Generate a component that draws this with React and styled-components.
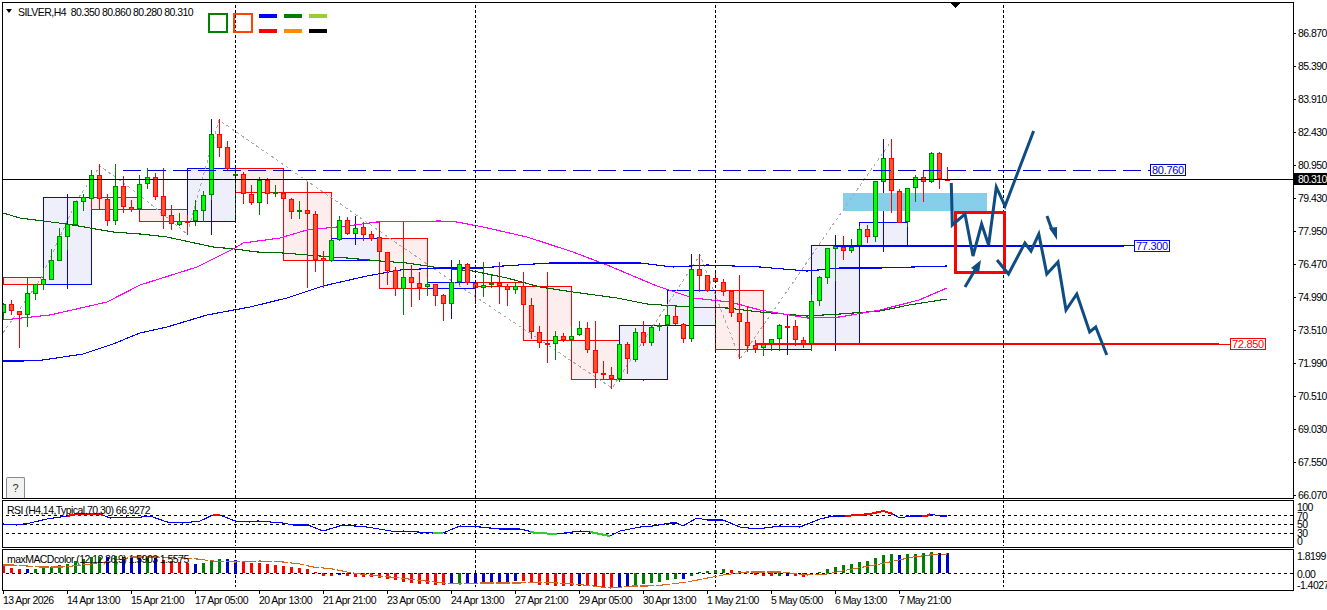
import React from 'react';
import styled, {createGlobalStyle} from 'styled-components';

const GlobalStyle = createGlobalStyle`
  html, body {
    margin: 0;
    padding: 0;
    background: #fff;
    overflow: hidden;
  }
  body {
    font-family: "Liberation Sans", Arial, sans-serif;
    font-size: 10.5px;
    letter-spacing: -0.55px;
    color: #000;
  }
`;

// up flag, body top, body bottom, high, low - all in page pixels, x = 3 + 8 * index
const CANDLES = [
  [1,304,313,303,320],[0,304,311,300,315],[0,311,315,311,348],[1,293,315,278,327],[1,284,294,284,300],
  [1,279,285,268,290],[1,260,280,249,280],[1,236,261,228,261],[1,224,237,224,250],[1,201,225,201,225],
  [1,197,202,194,211],[1,175,199,170,201],[0,175,199,164,209],[0,199,221,194,226],[1,186,221,164,225],
  [0,186,207,176,213],[0,207,210,200,212],[1,184,209,175,210],[1,177,184,168,189],[0,177,197,173,200],
  [0,196,216,168,229],[0,215,224,205,230],[1,221,225,213,226],[0,221,222,215,235],[1,210,221,200,226],
  [1,195,211,191,222],[1,134,195,134,200],[0,134,148,119,157],[0,147,169,141,171],[1,174,176,168,217],
  [0,174,194,172,204],[0,194,203,185,205],[1,180,203,177,215],[0,180,194,178,204],[1,192,194,185,197],
  [0,193,199,193,201],[0,199,212,198,219],[1,210,212,201,219],[0,210,214,202,229],[0,214,260,211,272],
  [0,258,261,251,288],[1,240,261,240,262],[1,220,240,216,241],[0,220,234,217,235],[1,228,234,228,234],
  [0,227,235,222,241],[0,234,239,231,241],[0,237,252,222,252],[0,252,271,252,285],[0,270,289,267,296],
  [1,277,289,253,315],[0,277,283,265,307],[0,283,288,272,300],[1,284,287,278,296],[0,284,296,284,306],
  [0,295,304,294,321],[1,282,304,282,304],[1,264,282,260,285],[0,264,283,263,285],[0,283,288,283,304],
  [1,285,288,262,297],[1,283,284,274,288],[0,283,286,262,304],[0,286,290,284,306],[1,286,290,282,294],
  [0,286,305,272,322],[0,305,332,298,339],[0,332,343,326,348],[0,343,344,326,363],[1,336,344,331,360],
  [0,336,340,333,342],[1,336,340,327,348],[1,328,335,321,336],[0,328,350,322,353],[0,350,373,321,388],
  [0,373,375,361,379],[0,375,379,367,389],[1,344,379,344,382],[0,344,359,342,374],[1,332,360,328,362],
  [0,332,343,321,346],[1,327,343,325,346],[1,325,327,323,331],[1,315,325,305,327],[0,316,324,307,325],
  [0,324,339,323,343],[1,269,339,269,342],[0,269,276,254,292],[0,275,291,275,292],[0,278,282,272,283],
  [0,282,292,279,296],[0,291,313,291,317],[0,313,322,275,359],[0,322,346,306,352],[0,345,349,340,353],
  [1,344,348,344,356],[1,339,344,339,351],[1,325,339,324,351],[0,326,327,326,327],[0,326,340,320,346],
  [0,340,344,337,348],[1,301,344,295,351],[1,277,301,276,306],[1,248,278,248,284],[1,246,249,246,281],
  [0,247,251,236,260],[1,247,251,239,253],[1,229,246,226,246],[0,229,237,225,243],[1,181,237,181,242],
  [1,158,182,158,182],[0,158,191,139,213],[0,191,223,189,223],[1,188,222,188,227],[1,177,188,175,202],
  [0,177,182,171,202],[1,153,182,152,183],[0,153,179,152,189],[0,179,180,167,180],
];

// higher timeframe boxes: x1, x2, top, bottom, colour, wick x, wick top, wick bottom
const BOXES = [
  [3,43,277,284,'r'],
  [43,91,197,284,'b',67,194,289],
  [91,139,197,209,'r'],
  [139,187,209,221,'r'],
  [187,235,168,221,'b',211,119,235],
  [235,283,168,192,'r'],
  [283,331,192,260,'r',307,182,288],
  [331,379,238,260,'b',355,216,245],
  [379,427,238,288,'r',403,222,315],
  [427,475,282,288,'b',451,260,319],
  [475,523,282,286,'r'],
  [523,571,286,340,'r',547,272,363],
  [571,619,340,379,'r',595,321,388],
  [619,667,325,379,'b',643,379,381],
  [667,715,290,325,'b',691,254,342],
  [715,763,290,349,'r',739,275,359],
  [763,811,344,349,'b',787,315,355],
  [811,859,245,344,'b',835,235,351],
  [859,907,222,245,'b',883,139,252],
];

const MA_GREEN = '3,213 20,218 43,221 67,224 90,228 113,232 140,234 167,237 190,242 213,247 235,249 257,252 283,253 320,256 347,258 380,261 407,263 440,268 473,271 507,278 540,287 573,292 617,298 647,304 690,307 727,308 760,312 807,316 840,314 880,311 909,305 947,299';
const MA_MAGENTA = '3,320 50,315 107,302 140,285 197,267 235,248 243,243 280,238 307,230 347,226 377,222 440,221 457,222 483,227 527,237 573,252 607,265 657,286 693,298 730,302 760,310 807,318 840,317 880,310 919,300 947,288';
const MA_BLUE = '3,361 23,361 43,360 83,354 113,344 140,333 167,327 207,315 250,307 287,298 323,286 367,276 400,270 440,268 483,268 503,266 550,263 590,263 640,263 673,267 707,265 760,267 807,271 840,268 880,268 947,266';
const ZIGZAG = '3,333 40,280 77,200 100,166 137,193 187,234 219,120 440,273 612,388 700,255 740,359 850,200 892,140';

const DRAWN_UP = '951.3,183 952.3,225 965,214 973,256 981.6,224 988.6,245 996.3,187 1005,206 1033.6,131';
const DRAWN_DOWN = '997,260 1008.5,274 1024.9,243 1031,251 1038.8,234 1046.8,274 1058,262 1066,310 1076.8,294 1089.7,332 1095.7,327 1106.8,355';

const RSI_LINE = '3,524 17,525 30,523 47,519 67,516 77,514 100,514 110,518 127,517 133,518 150,516 167,522 183,523 200,521 213,515 220,515 235,521 250,522 258,521 283,523 293,525 308,525 323,531 343,525 367,527 397,532 403,531 433,533 443,533 460,526 480,527 500,529 520,529 537,533 557,534 580,531 590,532 610,536 620,531 640,527 653,526 670,523 677,523 683,526 697,518 707,520 723,520 740,527 757,529 780,526 800,527 820,519 833,516 850,516 870,514 883,511 893,514 900,518 910,516 927,516 930,514 940,516 947,516';
const RSI_HOT = ['67,516 77,514 100,514 103,515', '213,515 220,515', '845,516 870,514 883,511 893,514', '922,516 927,516 930,514'];
const RSI_COLD = ['433,533 443,533', '530,532 537,533 557,534', '590,532 610,536'];

// histogram, one entry per candle: colour letter and the y of the far end of the bar
const MACD = [
  ['r',564],['r',568],['r',569],['b',569],['g',569],['g',567],['g',567],['g',565],['g',564],['g',561],
  ['g',559],['g',557],['g',557],['b',557],['g',556],['b',557],['b',558],['b',557],['g',557],['b',558],
  ['r',560],['r',561],['r',562],['r',563],['b',564],['g',563],['g',561],['g',559],['b',559],['b',560],
  ['r',561],['r',563],['r',563],['r',564],['r',565],['r',566],['r',567],['r',568],['r',569],['r',572],
  ['r',576],['r',576],['b',575],['r',576],['r',577],['r',577],['r',577],['r',578],['r',579],['r',580],
  ['r',582],['r',583],['r',584],['r',584],['r',585],['r',585],['b',584],['g',583],['b',583],['b',583],
  ['b',583],['b',582],['b',582],['b',582],['b',581],['r',581],['r',583],['r',585],['r',585],['r',586],
  ['r',586],['r',586],['b',586],['r',586],['r',587],['r',587],['r',587],['b',587],['b',587],['g',585],
  ['g',584],['g',583],['g',582],['g',580],['g',579],['b',579],['g',576],['g',572],['g',571],['g',570],
  ['g',569],['r',570],['r',571],['r',573],['r',575],['r',576],['r',576],['g',576],['b',576],['r',576],
  ['r',577],['g',575],['g',572],['g',569],['g',567],['g',565],['g',564],['g',562],['g',561],['g',558],
  ['g',555],['g',554],['b',555],['g',554],['g',554],['g',553],['g',552],['b',553],['b',553],
];
const MACD_SIGNAL = '3,565 13,565 27,566 40,567 63,567 83,565 100,563 117,560 133,557 157,557 183,558 197,559 213,561 235,562 260,561 283,562 300,564 313,567 333,569 347,572 367,575 390,577 417,580 443,583 460,584 480,583 500,583 520,583 540,582 573,584 593,586 610,588 633,586 647,586 663,585 687,582 713,577 723,575 747,572 780,572 807,575 827,574 847,570 880,564 913,557 930,555 947,554';

const VERTICALS = [235, 475, 715, 1003];
const HIST_COLORS = {g: '#008000', r: '#ff0000', b: '#0000cd'};
const TIMES = ['13 Apr 2026','14 Apr 13:00','15 Apr 21:00','17 Apr 05:00','20 Apr 13:00','21 Apr 21:00','23 Apr 05:00','24 Apr 13:00','27 Apr 21:00','29 Apr 05:00','30 Apr 13:00','1 May 21:00','5 May 05:00','6 May 13:00','7 May 21:00'];
const PRICES = ['86.870','85.390','83.910','82.430','80.950','79.430','77.950','76.470','74.990','73.510','71.990','70.510','69.030','67.550','66.070'];
const RSI_LEVELS = ['100','70','50','30','0'];

const Terminal = styled.div`
  width: 1327px;
  height: 610px;
  padding: 2px 0 0 2px;
  box-sizing: border-box;
  display: flex;
  flex-direction: column;
  gap: 1px;
  white-space: nowrap;
`;

const Pane = styled.div`
  display: flex;
  height: ${p => p.$height}px;
`;

const Plot = styled.div`
  position: relative;
  width: 1292px;
  box-sizing: border-box;
  border: 1px solid #000;
  flex: none;
  svg {
    display: block;
  }
`;

const PriceAxis = styled.div`
  position: relative;
  flex: 1;
  display: flex;
  flex-direction: column;
  padding-top: 15px;
`;

const PriceTick = styled.div`
  position: relative;
  height: 33px;
  line-height: 33px;
  padding-left: 4px;
  &::before {
    content: '';
    position: absolute;
    left: 0;
    top: 16px;
    width: 2px;
    height: 1px;
    background: #000;
  }
`;

const BidTag = styled.div`
  position: absolute;
  left: 0;
  right: 0;
  top: 171px;
  height: 12px;
  line-height: 12px;
  padding-left: 4px;
  background: #000;
  color: #fff;
`;

const RsiAxis = styled.div`
  flex: 1;
  padding: 3px 0 0 3px;
  display: flex;
  flex-direction: column;
`;

const RsiLevel = styled.div`
  height: 8.5px;
  line-height: 8.5px;
`;

const MacdAxis = styled.div`
  flex: 1;
  padding: 2px 0 0 3px;
  display: grid;
  grid-template-rows: 17.5px 11px 11px;
  line-height: 11px;
`;

const TimeAxis = styled.div`
  display: grid;
  grid-template-columns: repeat(15, 64px);
  padding-left: 1px;
  margin-top: -1px;
`;

const TimeLabel = styled.div`
  position: relative;
  padding-top: 3px;
  line-height: 12px;
  &::before {
    content: '';
    position: absolute;
    left: 0;
    top: 0;
    width: 1px;
    height: 3px;
    background: #000;
  }
`;

const SymbolTitle = styled.div`
  position: absolute;
  left: 15px;
  top: 3px;
  line-height: 12px;
`;

const TitleMark = styled.span`
  position: absolute;
  left: 3px;
  top: 6px;
  border-left: 3.5px solid transparent;
  border-right: 3.5px solid transparent;
  border-top: 4px solid #000;
`;

const IndicatorTitle = styled.div`
  position: absolute;
  left: 4px;
  top: ${p => p.$top}px;
  line-height: 12px;
`;

const Legend = styled.div`
  position: absolute;
  left: 205px;
  top: 10px;
  display: flex;
  gap: 5px;
`;

const Swatch = styled.div`
  width: 20px;
  height: 20px;
  box-sizing: border-box;
  border: 2px solid ${p => p.$color};
`;

const DashGrid = styled.div`
  display: grid;
  grid-template-columns: repeat(3, 18px);
  column-gap: 7px;
  row-gap: 11px;
  padding: 1px 0 0 1px;
`;

const Dash = styled.div`
  height: 4px;
  background: ${p => p.$color};
`;

const HelpButton = styled.button`
  position: absolute;
  left: 3px;
  bottom: 0;
  width: 19px;
  height: 21px;
  padding: 0;
  box-sizing: border-box;
  border: 1px solid #8a8a8a;
  border-bottom: 0;
  border-radius: 2px 2px 0 0;
  background: #f2f2f2;
  font: inherit;
  font-size: 11px;
  color: #333;
`;

const PriceTag = styled.div`
  position: absolute;
  left: ${p => p.$left}px;
  top: ${p => p.$top}px;
  padding: 0 1px;
  height: 10px;
  line-height: 10px;
  background: #fff;
  color: ${p => p.$color};
  border: 1px solid ${p => p.$color};
  font-size: 11px;
  letter-spacing: -0.3px;
`;

const Candle = ({index, data}) => {
  const [up, top, bottom, high, low] = data;
  const x = 3 + 8 * index;
  const line = up ? '#008000' : '#ff0000';
  return (
    <g>
      <rect x={x} y={high} width={1} height={low - high} fill={line}/>
      <rect x={x - 1.5} y={top + 0.5} width={4} height={Math.max(bottom - top - 1, 1)} fill={up ? '#00ff00' : '#ff5030'} stroke={line}/>
    </g>
  );
};

const HigherBox = ({data}) => {
  const [x1, x2, top, bottom, tone, wick, wickTop, wickBottom] = data;
  const line = tone === 'r' ? '#ff0000' : '#0000ff';
  return (
    <g>
      <rect x={x1 + 0.5} y={top + 0.5} width={x2 - x1} height={bottom - top} fill={tone === 'r' ? '#fdeeed' : '#eeeffb'} stroke={line}/>
      {wick && <rect x={wick} y={wickTop} width={1} height={wickBottom - wickTop} fill={line}/>}
    </g>
  );
};

const Verticals = ({height}) => VERTICALS.map(x => (
  <line key={x} x1={x + 0.5} x2={x + 0.5} y1={0} y2={height} stroke="#000" strokeDasharray="3 2"/>
));

const Level = ({y}) => (
  <line x1={0} x2={1293} y1={y + 0.5} y2={y + 0.5} stroke="#000" strokeDasharray="3 3"/>
);

const MainChart = () => (
  <svg width={1290} height={495} viewBox="3 3 1290 495" shapeRendering="crispEdges">
    {BOXES.map((b, i) => <HigherBox key={i} data={b}/>)}
    <rect x={843} y={193} width={144} height={18} fill="#87ceeb"/>
    <polyline points={ZIGZAG} fill="none" stroke="#a9a9a9" strokeDasharray="3 3"/>
    <polyline points={MA_GREEN} fill="none" stroke="#006400" strokeWidth={1.1}/>
    <polyline points={MA_MAGENTA} fill="none" stroke="#ff00ff" strokeWidth={1.1}/>
    <polyline points={MA_BLUE} fill="none" stroke="#0000ff" strokeWidth={1.1}/>
    {CANDLES.map((c, i) => <Candle key={i} index={i} data={c}/>)}
    <Verticals height={500}/>
    <line x1={123} x2={1151} y1={170.5} y2={170.5} stroke="#0000cd" strokeDasharray="18 7"/>
    <rect x={0} y={179} width={1293} height={1} fill="#000"/>
    <rect x={835} y={245} width={289} height={2} fill="#0000ff"/>
    <rect x={1124} y={245} width={11} height={1} fill="#0000ff"/>
    <rect x={755} y={343} width={464} height={2} fill="#ff0000"/>
    <rect x={1219} y={344} width={13} height={1} fill="#ff0000"/>
    <rect x={955.5} y={212.5} width={49} height={60} fill="none" stroke="#ff0000" strokeWidth={3}/>
    <g shapeRendering="auto" fill="none" stroke="#0f4c81" strokeWidth={3}>
      <polyline points={DRAWN_UP}/>
      <polyline points={DRAWN_DOWN}/>
      <line x1={965} y1={287} x2={975} y2={270}/>
      <line x1={1047} y1={216} x2={1052} y2={230}/>
    </g>
    <g shapeRendering="auto" fill="#0f4c81">
      <polygon points="981,260 971,268 979,273"/>
      <polygon points="1057,240 1049,228 1057,227"/>
    </g>
    <polygon points="950,3 960,3 955,8" fill="#000"/>
  </svg>
);

const RsiChart = () => (
  <svg width={1290} height={45} viewBox="3 501 1290 45" shapeRendering="crispEdges">
    <Verticals height={560}/>
    <Level y={515}/>
    <Level y={524}/>
    <Level y={533}/>
    <polyline points={RSI_LINE} fill="none" stroke="#0000ff" strokeWidth={1.1}/>
    {RSI_HOT.map(p => <polyline key={p} points={p} fill="none" stroke="#ff0000" strokeWidth={2}/>)}
    {RSI_COLD.map(p => <polyline key={p} points={p} fill="none" stroke="#32cd32" strokeWidth={2}/>)}
  </svg>
);

const MacdChart = () => (
  <svg width={1290} height={40} viewBox="3 550 1290 40" shapeRendering="crispEdges">
    <Verticals height={587}/>
    {MACD.map(([tone, end], i) => (
      <rect key={i} x={2 + 8 * i} y={Math.min(end, 573)} width={3} height={Math.abs(end - 573)} fill={HIST_COLORS[tone]}/>
    ))}
    <Level y={573}/>
    <polyline points={MACD_SIGNAL} fill="none" stroke="#d2691e" strokeWidth={1.1} strokeDasharray="14 2"/>
  </svg>
);

const App = () => (
  <Terminal>
    <GlobalStyle/>
    <Pane $height={497}>
      <Plot>
        <MainChart/>
        <TitleMark/>
        <SymbolTitle>SILVER,H4&nbsp; 80.350 80.860 80.280 80.310</SymbolTitle>
        <Legend>
          <Swatch $color="#008000"/>
          <Swatch $color="#ff4500"/>
          <DashGrid>
            {['#0000ff', '#008000', '#9acd32', '#ff0000', '#ff8c00', '#000'].map(c => <Dash key={c} $color={c}/>)}
          </DashGrid>
        </Legend>
        <HelpButton>?</HelpButton>
        <PriceTag $left={1147} $top={161} $color="#0000cd">80.760</PriceTag>
        <PriceTag $left={1131} $top={237} $color="#0000ff">77.300</PriceTag>
        <PriceTag $left={1227} $top={335} $color="#ff0000">72.850</PriceTag>
      </Plot>
      <PriceAxis>
        {PRICES.map(p => <PriceTick key={p}>{p}</PriceTick>)}
        <BidTag>80.310</BidTag>
      </PriceAxis>
    </Pane>
    <Pane $height={48}>
      <Plot>
        <RsiChart/>
        <IndicatorTitle $top={3}>RSI (H4,14,Typical,70,30) 66.9272</IndicatorTitle>
      </Plot>
      <RsiAxis>
        {RSI_LEVELS.map(l => <RsiLevel key={l}>{l}</RsiLevel>)}
      </RsiAxis>
    </Pane>
    <Pane $height={42}>
      <Plot>
        <MacdChart/>
        <IndicatorTitle $top={3}>maxMACDcolor (12,12,26,9) 1.5903 1.5575</IndicatorTitle>
      </Plot>
      <MacdAxis>
        <div>1.8199</div>
        <div>0.00</div>
        <div>-1.4027</div>
      </MacdAxis>
    </Pane>
    <TimeAxis>
      {TIMES.map(t => <TimeLabel key={t}>{t}</TimeLabel>)}
    </TimeAxis>
  </Terminal>
);

export default App;
